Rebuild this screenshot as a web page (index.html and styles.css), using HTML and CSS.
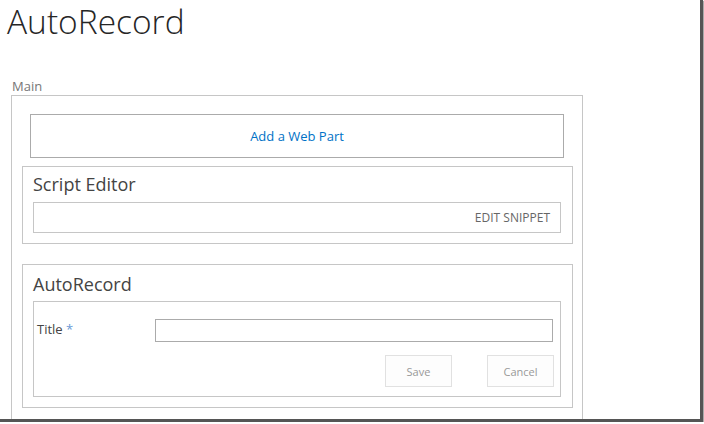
FILE: index.html
```html
<!DOCTYPE html>
<html>
<head>
<meta charset="utf-8">
<link rel="stylesheet" href="styles.css">
</head>
<body>
<div class="page">
  <h1 class="page-title">AutoRecord</h1>
  <div class="zone-label">Main</div>
  <div class="zone">
    <div class="add-wp"><a class="add-link" href="#">Add a Web Part</a></div>
    <div class="webpart">
      <h2 class="wp-title wp-title-se">Script Editor</h2>
      <div class="snippet"><span class="snippet-link">EDIT SNIPPET</span></div>
    </div>
    <div class="webpart webpart-ar">
      <h2 class="wp-title wp-title-ar">AutoRecord</h2>
      <div class="form">
        <div class="form-row">
          <label class="form-label">Title <span class="req">*</span></label>
          <input class="form-input" type="text">
        </div>
        <div class="form-buttons">
          <button class="btn">Save</button>
          <button class="btn">Cancel</button>
        </div>
      </div>
    </div>
  </div>
</div>
</body>
</html>
```
FILE: styles.css
```css
html, body {
  margin: 0;
  padding: 0;
  background: #ffffff;
}
.page {
  width: 700px;
  height: 419px;
  padding-top: 1px;
  box-sizing: border-box;
  background: #ffffff;
  border-right: 3px solid #555555;
  border-bottom: 3px solid #555555;
  box-shadow: 1px 1px 1px #aaaaaa;
  font-family: "Open Sans", "Liberation Sans", sans-serif;
  color: #444444;
  width: 703px;
  height: 422px;
}
.page-title {
  margin: 0;
  padding-left: 7px;
  font-size: 33.5px;
  line-height: 40px;
  font-weight: 300;
  color: #262626;
}
.zone-label {
  margin: 37px 0 1px 12px;
  font-size: 13px;
  line-height: 16px;
  color: #777777;
}
.zone {
  box-sizing: border-box;
  margin-left: 11px;
  width: 572px;
  height: 324px;
  border: 1px solid #c6c6c6;
  border-bottom: 0;
  padding: 18px 9px 0 10px;
}
.add-wp {
  box-sizing: border-box;
  height: 44px;
  margin: 0 9px 8px 8px;
  border: 1px solid #ababab;
  display: flex;
  align-items: center;
  justify-content: center;
}
.add-link {
  font-size: 13px;
  color: #0072c6;
  text-decoration: none;
}
.webpart {
  box-sizing: border-box;
  border: 1px solid #c6c6c6;
  padding: 0 11px 10px 10px;
}
.webpart-ar {
  margin-top: 20px;
  padding-bottom: 10px;
}
.wp-title {
  margin: 0;
  font-size: 18px;
  line-height: 24px;
  font-weight: 400;
  color: #444444;
}
.wp-title-se {
  padding-top: 5px;
  margin-bottom: 6px;
}
.wp-title-ar {
  padding-top: 7px;
  margin-bottom: 5px;
}
.snippet {
  box-sizing: border-box;
  height: 31px;
  border: 1px solid #c6c6c6;
  display: flex;
  align-items: center;
  justify-content: flex-end;
  padding-right: 10px;
}
.snippet-link {
  font-size: 12px;
  color: #666666;
}
.form {
  box-sizing: border-box;
  height: 96px;
  border: 1px solid #c6c6c6;
  padding: 17px 6px 9px 3px;
}
.form-row {
  display: flex;
  align-items: center;
  height: 23px;
}
.form-label {
  width: 118px;
  font-size: 13px;
  color: #444444;
  margin-top: -3px;
}
.req {
  color: #6a9ad6;
}
.form-input {
  box-sizing: border-box;
  width: 398px;
  height: 23px;
  margin: 0;
  border: 1px solid #ababab;
  padding: 0 4px;
  font-family: inherit;
}
.form-buttons {
  display: flex;
  justify-content: flex-end;
  gap: 35px;
  margin-top: 13px;
}
.btn {
  box-sizing: border-box;
  width: 67px;
  height: 32px;
  margin: 0;
  border: 1px solid #e1e1e1;
  background: #fdfdfd;
  color: #999999;
  font-family: inherit;
  font-size: 11px;
}
```
